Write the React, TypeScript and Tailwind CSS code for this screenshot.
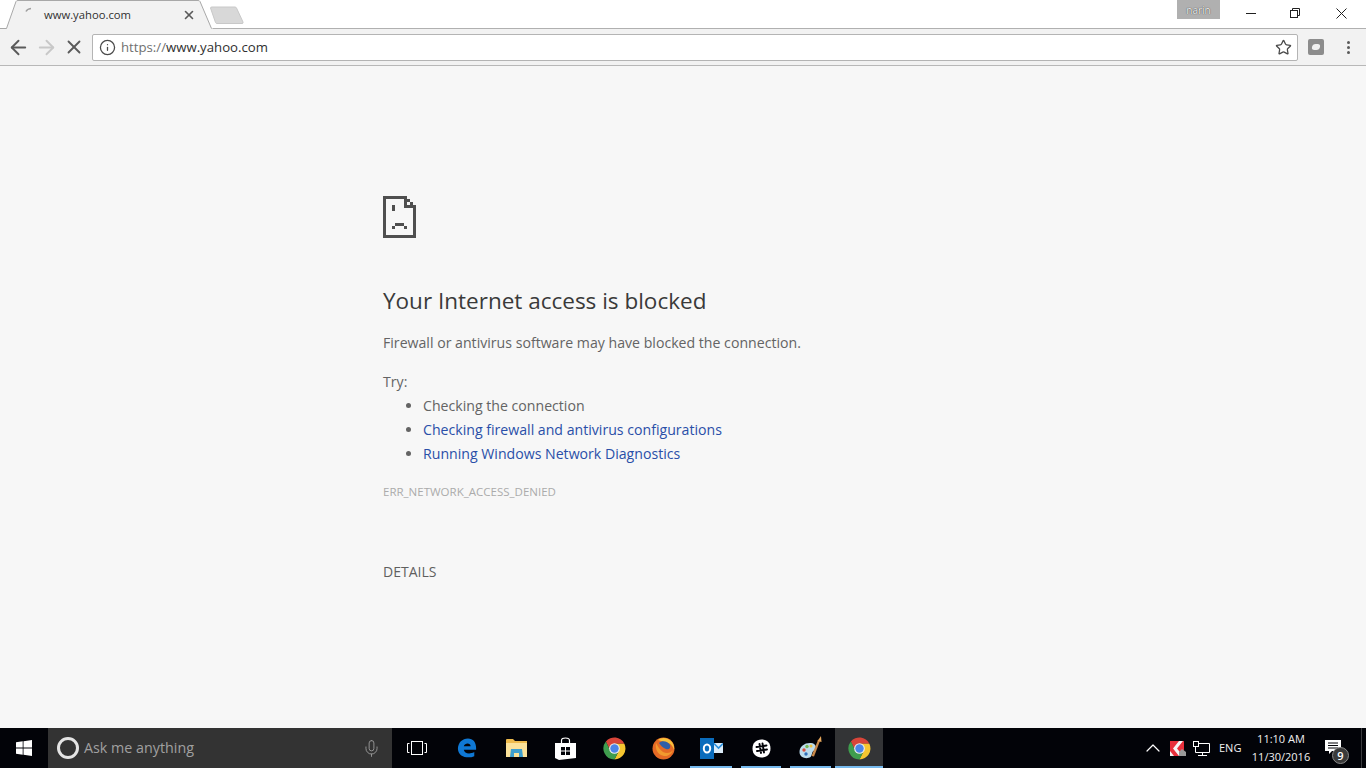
import { ArrowLeft, ArrowRight, X, Star, Info, Mic, ChevronUp } from 'lucide-react';

const SANS = 'font-["Open_Sans","Noto_Sans",sans-serif]';

function SadDoc() {
  // pixel art, one cell = 3px
  const cells: [number, number, number, number][] = [
    [0, 0, 8, 1],
    [0, 0, 1, 14],
    [0, 13, 11, 1],
    [10, 3, 1, 11],
    [7, 0, 1, 4],
    [7, 3, 4, 1],
    [8, 1, 1, 1],
    [9, 2, 1, 1],
    [3, 3, 1, 2],
    [4, 9, 3, 1],
    [3, 10, 1, 1],
    [7, 10, 1, 1],
  ];
  return (
    <svg width="33" height="42" viewBox="0 0 33 42" fill="#4f4f4f" shapeRendering="crispEdges">
      {cells.map(([x, y, w, h], i) => (
        <rect key={i} x={x * 3} y={y * 3} width={w * 3} height={h * 3} />
      ))}
    </svg>
  );
}

function ChromeIcon() {
  return (
    <svg width="23" height="23" viewBox="0 0 24 24">
      <path d="M12 7 H22.3 A11.5 11.5 0 0 0 3 4.8 L7.7 14.5z" fill="#d9453a" />
      <path d="M12 7 H22.3 A11.5 11.5 0 0 1 12 23.5 L16.4 14.5z" fill="#f6c630" />
      <path d="M3 4.8 A11.5 11.5 0 0 0 12 23.5 L16.4 14.5 H7.7z" fill="#3f9d4e" />
      <circle cx="12" cy="12" r="5.6" fill="#eeeeee" />
      <circle cx="12" cy="12" r="4.4" fill="#4c85e8" />
    </svg>
  );
}

function TaskItem({ children, width, running, active }: { children: React.ReactNode; width: string; running?: boolean; active?: boolean }) {
  return (
    <div className={`relative flex items-center justify-center shrink-0 h-full ${width} ${active ? 'bg-[#333436]' : ''}`}>
      {children}
      {running && <div className="absolute left-0 right-0 bottom-0 h-[2px] bg-[#76b9ed]" />}
    </div>
  );
}

export default function App() {
  return (
    <div className={`flex flex-col w-[1366px] h-[768px] overflow-hidden bg-[#f7f7f7] ${SANS}`}>
      {/* Tab strip */}
      <div className="relative flex h-[29px] shrink-0 bg-white border-b border-[#b0b0b0]">
        <div className="relative w-[213px] h-[29px] shrink-0">
          <svg className="absolute inset-0" width="213" height="29" viewBox="0 0 213 29">
            <path d="M0 28.5 H6.5 L16 1.5 Q16.5 0.5 18 0.5 H198 Q199.5 0.5 200 1.5 L211.5 28.5 H213 V29 H0z" fill="#f2f2f2" />
            <path d="M0 28.5 H6.5 L16 1.5 Q16.5 0.5 18 0.5 H198 Q199.5 0.5 200 1.5 L211.5 28.5" fill="none" stroke="#a8a8a8" />
            <path d="M26 11.5 Q27 9 31 8.5" fill="none" stroke="#a0a0a0" strokeWidth="1.5" />
          </svg>
          <div className="absolute left-[44px] top-[6px] text-[11.25px] leading-[18px] text-[#303030]">www.yahoo.com</div>
          <X className="absolute left-[182px] top-[8px] text-[#5a5a5a]" size={14} strokeWidth={2.8} />
        </div>
        <svg className="shrink-0 -ml-[4px] mt-[6px]" width="36" height="19" viewBox="0 0 36 19">
          <path d="M1.5 2 Q1.5 1 3 1 H26 Q27 1 27.5 2 L34 16 Q34.5 17.5 33 17.5 H8 Q7 17.5 6.5 16.5z" fill="#d8d8d8" stroke="#c8c8c8" />
        </svg>
        <div className="flex-1" />
        <div className="flex items-center justify-center w-[43px] h-[19px] bg-[#b0b0b0] text-[10px] leading-none text-[#f4f4f4] mr-[8px] [text-shadow:0_0_1px_#000000]">narin</div>
        <div className="flex w-[138px] pr-[2px] items-start">
          <div className="flex justify-center w-[45px] pt-[13px]">
            <div className="w-[10px] h-px bg-[#202020]" />
          </div>
          <div className="flex justify-center w-[45px] pt-[8px]">
            <svg width="11" height="10" viewBox="0 0 11 10" fill="none" stroke="#202020">
              <rect x="0.5" y="2.5" width="7" height="7" />
              <path d="M2.5 2.5 V0.5 H9.5 V7.5 H7.5" />
            </svg>
          </div>
          <div className="flex justify-center w-[46px] pt-[8px]">
            <svg width="11" height="11" viewBox="0 0 11 11" stroke="#202020">
              <path d="M0.5 0.5 L10.5 10.5 M10.5 0.5 L0.5 10.5" />
            </svg>
          </div>
        </div>
      </div>

      {/* Toolbar */}
      <div className="flex items-center h-[37px] shrink-0 bg-[#f2f2f2] border-b border-[#b8b8b8]">
        <div className="flex items-center w-[92px] pl-[4px]">
          <div className="flex justify-center w-[28px]"><ArrowLeft size={23} strokeWidth={2} className="text-[#5a5a5a]" /></div>
          <div className="flex justify-center w-[28px]"><ArrowRight size={23} strokeWidth={2} className="text-[#c8c8c8]" /></div>
          <div className="flex justify-center w-[28px]"><X size={22} strokeWidth={2} className="text-[#5a5a5a]" /></div>
        </div>
        <div className="flex items-center w-[1206px] h-[27px] bg-white border border-[#b4b4b4] rounded-[2px] pl-[6px] pr-[5px]">
          <Info size={17} strokeWidth={1.8} className="text-[#4a4a4a]" />
          <div className="ml-[5px] mt-px text-[13.2px] leading-none text-[#303030]">
            <span className="text-[#707070]">https://</span>www.yahoo.com
          </div>
          <div className="flex-1" />
          <Star size={17} strokeWidth={1.8} className="text-[#4a4a4a]" />
        </div>
        <div className="ml-[10px] flex items-center justify-center w-[16px] h-[16px] rounded-[2px] bg-[#8c8c8c]">
          <div className="w-[8px] h-[6px] rounded-[3px] -skew-x-12 bg-[#f0f0f0]" />
        </div>
        <div className="ml-[23px] flex flex-col gap-[2px]">
          <div className="w-[3px] h-[3px] rounded-full bg-[#5a5a5a]" />
          <div className="w-[3px] h-[3px] rounded-full bg-[#5a5a5a]" />
          <div className="w-[3px] h-[3px] rounded-full bg-[#5a5a5a]" />
        </div>
      </div>

      {/* Error page */}
      <main className="flex-1 pl-[383px] pt-[130px]">
        <SadDoc />
        <h1 className="mt-[47px] text-[22.5px] leading-[32px] font-normal text-[#3a3a3a]">Your Internet access is blocked</h1>
        <p className="mt-[14px] text-[14.14px] leading-[24px] text-[#646464]">Firewall or antivirus software may have blocked the connection.</p>
        <p className="mt-[15px] text-[14.14px] leading-[24px] text-[#646464]">Try:</p>
        <ul className="pl-[40px] list-disc text-[14.14px] leading-[24px] text-[#646464]">
          <li>Checking the connection</li>
          <li className="text-[#2a4fa8] marker:text-[#646464]">Checking firewall and antivirus configurations</li>
          <li className="text-[#2a4fa8] marker:text-[#646464]">Running Windows Network Diagnostics</li>
        </ul>
        <p className="mt-[18px] text-[11.5px] leading-[16px] text-[#ababab]">ERR_NETWORK_ACCESS_DENIED</p>
        <button className="block mt-[63px] text-[14px] leading-[18px] text-[#5f5f5f]">DETAILS</button>
      </main>

      {/* Taskbar */}
      <div className="flex items-center h-[40px] shrink-0 bg-[#020308] text-white">
        <div className="flex items-center justify-center w-[48px] h-full">
          <svg width="16" height="16" viewBox="0 0 16 16" fill="#ffffff">
            <path d="M0 2.3 L6.7 1.3 V7.5 H0z M7.5 1.2 L16 0 V7.5 H7.5z M0 8.4 H6.7 V14.7 L0 13.7z M7.5 8.4 H16 V16 L7.5 14.8z" />
          </svg>
        </div>
        <div className="flex items-center w-[344px] h-full bg-[#333333] pl-[9px] pr-[11px]">
          <div className="w-[22px] h-[22px] rounded-full border-[3px] border-[#e4e4e4]" />
          <div className="ml-[5px] text-[14.3px] text-[#a0a0a0]">Ask me anything</div>
          <div className="flex-1" />
          <Mic size={19} strokeWidth={1.1} className="text-[#a0a0a0]" />
        </div>
        <TaskItem width="w-[49px]">
          <svg width="20" height="14" viewBox="0 0 20 14" fill="none" stroke="#ffffff">
            <rect x="4.5" y="0.5" width="11" height="13" />
            <path d="M2.5 2.5 H0.5 V11.5 H2.5 M17.5 2.5 H19.5 V11.5 H17.5" />
          </svg>
        </TaskItem>
        <TaskItem width="w-[51px]">
          <svg width="20" height="20" viewBox="0 0 22 22">
            <path d="M1 12 C1 5 6 0.5 12 0.5 C18 0.5 21.5 5 21 13 H7.5 C8 17 13.5 18.5 19 15.5 V20 C12 23 1.5 21 1 12z M7.5 9 H15 C15 5 8.5 5 7.5 9z" fill="#0f78d4" fillRule="evenodd" />
          </svg>
        </TaskItem>
        <TaskItem width="w-[49px]">
          <svg width="21" height="18" viewBox="0 0 21 18">
            <path d="M0 1 Q0 0 1 0 H7 L9 2 H21 V18 H0z" fill="#eebb4d" />
            <path d="M0 4 H21 V18 H0z" fill="#fbe29a" />
            <path d="M4 18 L5 10 H16 L17 18 H13 V14 H8 V18z" fill="#3d9fce" />
          </svg>
        </TaskItem>
        <TaskItem width="w-[48px]">
          <svg width="21" height="23" viewBox="0 0 21 23">
            <path d="M6.5 7 V3.5 Q6.5 1 10.5 1 Q14.5 1 14.5 3.5 V7" fill="none" stroke="#ffffff" strokeWidth="1.2" />
            <path d="M0 6 H21 V21 L4 23 L0 21z" fill="#ffffff" />
            <path d="M6 10 H10 V13.5 H6z M11 10 H15 V13.5 H11z M6 14.5 H10 V18 H6z M11 14.5 H15 V18 H11z" fill="#020308" />
          </svg>
        </TaskItem>
        <TaskItem width="w-[50px]"><ChromeIcon /></TaskItem>
        <TaskItem width="w-[49px]">
          <svg width="23" height="23" viewBox="0 0 23 23">
            <circle cx="11.5" cy="11.5" r="11" fill="#e56a25" />
            <path d="M6 3 C9 0 16 0 20 5 C22 8 22.5 11 22 13 C21 8 17 5 13 5.5 C10 4 8 4 6 3z" fill="#f7c23c" />
            <path d="M7 6 C10 3 16 4 18 8 C19 11 17 13 14 12 C11 11 9 9 7 6z" fill="#2f5fa8" />
            <path d="M4 6 C3 11 5 18 12 19 C17 19.5 20 16 21 13 C19 16 15 17 11 15 C8 13 6 10 4 6z" fill="#f29a2e" />
          </svg>
        </TaskItem>
        <div className="w-[2px] shrink-0" />
        <TaskItem width="w-[42px]" running>
          <svg width="23" height="21" viewBox="0 0 23 21">
            <path d="M0 0 H14 V21 H0z" fill="#0a6cbc" />
            <path d="M14 5 H23 V15 H14z" fill="#dcecf8" />
            <path d="M14 5.5 L18.5 10 L23 5.5" fill="none" stroke="#2b8fdc" strokeWidth="1.6" />
            <ellipse cx="7" cy="10.5" rx="3.2" ry="4" fill="none" stroke="#ffffff" strokeWidth="2" />
          </svg>
        </TaskItem>
        <div className="w-[9px] shrink-0" />
        <TaskItem width="w-[40px]" running>
          <svg width="19" height="19" viewBox="0 0 19 19">
            <path d="M9.5 0.5 C15 0.5 18.5 4 18.5 9.5 C18.5 15 15 18.5 9.5 18.5 C4 18.5 0.5 15 0.5 9.5 C0.5 4 4 0.5 9.5 0.5z" fill="#ffffff" />
            <path d="M7.5 5 L9 14 M10.5 4.5 L12 13.5 M4.5 8 L14.5 6.5 M5 12 L15 10.5" stroke="#020308" strokeWidth="1.9" strokeLinecap="round" />
          </svg>
        </TaskItem>
        <div className="w-[9px] shrink-0" />
        <TaskItem width="w-[41px]" running>
          <svg width="24" height="24" viewBox="0 0 24 24">
            <path d="M0.5 16 C0.5 10 6 6.5 12 7 C17 7.5 18.5 12 15 14.5 C12.5 16 13.5 19 11.5 21 C8 23.5 0.5 22 0.5 16z" fill="#bcdcec" />
            <circle cx="5" cy="14" r="1.7" fill="#d9503f" />
            <circle cx="8" cy="10.5" r="1.7" fill="#74b955" />
            <circle cx="12" cy="10" r="1.5" fill="#f0c23e" />
            <circle cx="7" cy="18" r="1.7" fill="#2f6fb8" />
            <path d="M12.5 20 L19 4 L21 5 L15 20.5z" fill="#c9894a" />
            <path d="M18.5 5 L22 0 L22.5 6z" fill="#e8a85c" />
          </svg>
        </TaskItem>
        <div className="w-[4px] shrink-0" />
        <TaskItem width="w-[48px]" running active><ChromeIcon /></TaskItem>

        <div className="flex-1" />

        {/* System tray */}
        <ChevronUp size={24} strokeWidth={1.2} className="text-white" />
        <svg className="ml-[5px]" width="16" height="15" viewBox="0 0 16 15">
          <path d="M0 0 H14 V9 L13 15 H0z" fill="#e8303c" />
          <path d="M9 0 H13 L7 7.5 L13 15 H9 L3 7.5z" fill="#f6f6f6" />
          <path d="M0 10 L4 15 H0z" fill="#f6f6f6" />
          <path d="M9 11 L12 8 L16 11 V15 H9z" fill="#9a9a9a" />
        </svg>
        <svg className="ml-[7px]" width="17" height="15" viewBox="0 0 17 15" fill="none" stroke="#ffffff">
          <rect x="0.5" y="0.5" width="5" height="5" />
          <path d="M6 2.5 H16.5 V11.5 H2.5 V6 M9.5 11.5 V14.5 M5 14.5 H14" />
        </svg>
        <div className="ml-[9px] w-[23px] text-[11px] text-[#f0f0f0]">ENG</div>
        <div className="ml-[9px] flex flex-col items-center w-[60px] text-[11px] leading-[18px] text-[#f0f0f0]">
          <div>11:10 AM</div>
          <div className="whitespace-nowrap">11/30/2016</div>
        </div>
        <div className="relative ml-[14px] w-[20px] h-[26px]">
          <svg className="absolute left-0 top-[5px]" width="16" height="15" viewBox="0 0 16 15">
            <path d="M0 0 H16 V11 H7 L4 14 V11 H0z" fill="#ffffff" />
            <path d="M3 3 H13 M3 5.5 H13 M3 8 H13" stroke="#020308" />
          </svg>
          <div className="absolute left-[7px] top-[12px] flex items-center justify-center w-[17px] h-[17px] rounded-full bg-[#3a3a3a] border border-[#8a8a8a] text-[11px] font-semibold text-white leading-none">9</div>
        </div>
        <div className="ml-[16px] mr-[4px] w-px h-full bg-[#3a3b3e]" />
      </div>
    </div>
  );
}
